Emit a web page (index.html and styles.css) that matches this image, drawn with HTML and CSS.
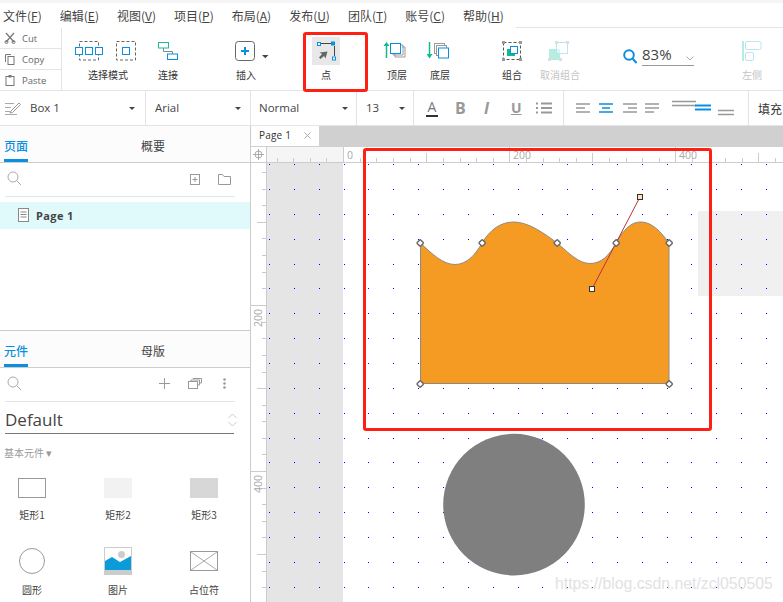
FILE: index.html
```html
<!DOCTYPE html>
<html lang="zh">
<head>
<meta charset="utf-8">
<title>Axure</title>
<link rel="stylesheet" href="styles.css">
</head>
<body>
<div class="app">
  <nav class="menubar">
    <span class="menu">文件(<u>F</u>)</span>
    <span class="menu">编辑(<u>E</u>)</span>
    <span class="menu">视图(<u>V</u>)</span>
    <span class="menu">项目(<u>P</u>)</span>
    <span class="menu">布局(<u>A</u>)</span>
    <span class="menu">发布(<u>U</u>)</span>
    <span class="menu">团队(<u>T</u>)</span>
    <span class="menu">账号(<u>C</u>)</span>
    <span class="menu">帮助(<u>H</u>)</span>
    <span class="menu-line"></span>
  </nav>

  <div class="toolbar">
    <div class="clip">
      <div class="clip-row">
        <svg class="clip-ico" width="12" height="12" viewBox="0 0 12 12"><path d="M2 1l8 9M10 1L2 10" fill="none" stroke="#777" stroke-width="1.200"/><circle cx="2.500" cy="10" r="1.500" fill="none" stroke="#777"/><circle cx="9.500" cy="10" r="1.500" fill="none" stroke="#777"/></svg>
        <span>Cut</span>
      </div>
      <div class="clip-row">
        <svg class="clip-ico" width="12" height="12" viewBox="0 0 12 12"><path d="M1.500 9V1.500H7" fill="none" stroke="#777"/><rect x="4" y="3.500" width="6" height="8" fill="none" stroke="#777"/></svg>
        <span>Copy</span>
      </div>
      <div class="clip-row">
        <svg class="clip-ico" width="12" height="12" viewBox="0 0 12 12"><rect x="2" y="2.500" width="8" height="9" fill="none" stroke="#777"/><rect x="4.500" y="1" width="3" height="2.500" fill="#777"/></svg>
        <span>Paste</span>
      </div>
    </div>

    <div class="tool t-select">
      <svg width="62" height="24" viewBox="75 39 62 24"><rect x="79.500" y="41.500" width="19" height="18.500" fill="none" stroke="#666" stroke-dasharray="3 2"/><rect x="116.500" y="41.500" width="19" height="18.500" fill="none" stroke="#666" stroke-dasharray="3 2"/><g fill="#fff" stroke="#0b8fe0"><rect x="75.500" y="47.500" width="7" height="7"/><rect x="85.500" y="47.500" width="7" height="7"/><rect x="95.500" y="47.500" width="7" height="7"/><rect x="122.500" y="47.500" width="7" height="7"/></g></svg>
      <span>选择模式</span>
    </div>
    <div class="tool t-connect">
      <svg width="22" height="24" viewBox="157 39 22 24"><path d="M163.500 48v3.500h9V54" fill="none" stroke="#888"/><rect x="158.500" y="42.500" width="10" height="5.500" fill="#fff" stroke="#1abc9c"/><rect x="167.500" y="54" width="10" height="5.500" fill="#fff" stroke="#0b8fe0"/></svg>
      <span>连接</span>
    </div>
    <div class="tool t-insert">
      <svg width="36" height="24" viewBox="234 39 36 24"><rect x="235.500" y="41.500" width="19" height="19" rx="3" fill="#fff" stroke="#666"/><path d="M245 47v8M241 51h8" stroke="#0b8fe0" stroke-width="2"/><path d="M262 55h6.500l-3.200 3.200z" fill="#444"/></svg>
      <span>插入</span>
    </div>
    <div class="tool t-point">
      <svg width="28" height="28" viewBox="312 37 28 28"><rect x="312" y="37" width="28" height="28" fill="#e8e8e8"/><path d="M321 43.500h10M334.500 46v10" stroke="#444"/><rect x="317.500" y="42.500" width="3" height="3" fill="#fff" stroke="#0b8fe0"/><rect x="331" y="41.500" width="4" height="4" fill="#0b8fe0"/><rect x="332.500" y="57" width="3" height="3" fill="#fff" stroke="#0b8fe0"/><path d="M327.500 51.500l-2 7-1.500-2.500-3.500 3-1.500-1.500 3-3.500-2.500-1.500z" fill="#666"/></svg>
      <span>点</span>
    </div>
    <div class="tool t-top">
      <svg width="24" height="24" viewBox="387 39 24 24"><path d="M390.500 58V45" stroke="#14b98f" stroke-width="1.500"/><path d="M387.500 46l3-4 3 4z" fill="#14b98f"/><path d="M406 47h3v10h-10v-3" fill="none" stroke="#999"/><path d="M405 45h2v10h-10v-2" fill="none" stroke="#999"/><rect x="394.500" y="43.500" width="10" height="10" fill="#fff" stroke="#0b8fe0"/></svg>
      <span>顶层</span>
    </div>
    <div class="tool t-bottom">
      <svg width="24" height="24" viewBox="429 39 24 24"><path d="M431.500 42v13" stroke="#14b98f" stroke-width="1.500"/><path d="M428.500 54l3 4.500 3-4.500z" fill="#14b98f"/><rect x="436.500" y="43.500" width="10" height="10" fill="#fff" stroke="#999"/><rect x="438.500" y="45.500" width="10" height="10" fill="#fff" stroke="#999"/><rect x="440.500" y="48" width="10" height="10" fill="#fff" stroke="#0b8fe0"/></svg>
      <span>底层</span>
    </div>
    <div class="tool t-group">
      <svg width="24" height="24" viewBox="500 39 24 24"><rect x="503.500" y="42.500" width="17" height="17" fill="none" stroke="#555" stroke-dasharray="3 2"/><g fill="#999"><rect x="502" y="41" width="3" height="3"/><rect x="519" y="41" width="3" height="3"/><rect x="502" y="58" width="3" height="3"/><rect x="519" y="58" width="3" height="3"/></g><rect x="507" y="49" width="8" height="7" fill="#14b98f"/><rect x="510.500" y="46.500" width="7" height="7" fill="#fff" stroke="#0b8fe0"/></svg>
      <span>组合</span>
    </div>
    <div class="tool t-ungroup">
      <svg width="24" height="24" viewBox="549 39 24 24"><rect x="551" y="49" width="11" height="11" fill="#b7ece0"/><rect x="558.500" y="42.500" width="11" height="11" fill="#fff" fill-opacity=".5" stroke="#bfe3f6"/><g fill="#ddd"><rect x="557" y="41" width="3" height="3"/><rect x="568" y="41" width="3" height="3"/><rect x="550" y="58" width="3" height="3"/><rect x="561" y="58" width="3" height="3"/></g></svg>
      <span>取消组合</span>
    </div>
    <div class="zoom">
      <svg width="14" height="15" viewBox="623 49 14 15"><circle cx="629" cy="55" r="4.800" fill="none" stroke="#0b8fe0" stroke-width="2"/><path d="M632.500 58.500l4 4.500" stroke="#0b8fe0" stroke-width="2"/></svg>
      <div class="zoom-field"><span>83%</span><svg width="8" height="5" viewBox="0 0 8 5"><path d="M.5.500L4 4l3.500-3.500" fill="none" stroke="#aaa"/></svg></div>
    </div>
    <div class="tool t-left">
      <svg width="22" height="24" viewBox="742 39 22 24"><rect x="743" y="41" width="2" height="20" fill="#b7ece0"/><rect x="746.500" y="41.500" width="15.500" height="8" rx="1.500" fill="none" stroke="#bfe3f6"/><rect x="746.500" y="52.500" width="8" height="8" rx="1.500" fill="none" stroke="#bfe3f6"/></svg>
      <span>左侧</span>
    </div>
  </div>

  <div class="formatbar">
    <div class="cell c-name">
      <svg width="16" height="14" viewBox="0 0 16 14"><path d="M0 2.500h9M0 6.500h6M0 10.500h5M0 13.500h12" stroke="#aaa"/><path d="M6 10l8-8 1.500 1.500-8 8-2.500.5z" fill="#fff" stroke="#999"/></svg>
      <span class="cell-text">Box 1</span><i class="caret"></i>
    </div>
    <div class="cell c-font"><span>Arial</span><i class="caret"></i></div>
    <div class="cell c-style"><span>Normal</span><i class="caret"></i></div>
    <div class="cell c-size"><span>13</span><i class="caret"></i></div>
    <div class="cell c-text">
      <span class="fmt fmt-a">A</span>
      <span class="fmt fmt-b">B</span>
      <span class="fmt fmt-i">I</span>
      <span class="fmt fmt-u">U</span>
      <svg width="16" height="12" viewBox="0 0 16 12"><path d="M5 1.500h11M5 6h11M5 10.500h11" stroke="#999" stroke-width="2"/><path d="M0 1.500h3M0 6h3M0 10.500h3" stroke="#999" stroke-width="2" stroke-dasharray="2 1"/></svg>
    </div>
    <div class="cell c-align">
      <svg width="162" height="18" viewBox="575 99 162 18"><g stroke="#999" stroke-width="1.500" fill="none"><path d="M576 104h14M576 108h9M576 112h14M623 104h14M628 108h9M623 112h14M645 104h14M645 108h14M645 112h9M672 101.500h24M672 105.500h24M718 110.500h16M718 114.500h16"/></g><g stroke="#0b8fe0" stroke-width="1.500" fill="none"><path d="M599 104h14M602 108h8M599 112h14"/></g><path d="M695 105.500h16M695 109.500h16" stroke="#0b8fe0" stroke-width="2"/></svg>
    </div>
    <div class="cell c-fill">填充</div>
  </div>

  <div class="main">
    <aside class="side">
      <section class="pages">
        <div class="tabs">
          <span class="tab active">页面</span>
          <span class="tab other">概要</span>
        </div>
        <div class="search">
          <svg class="search-ico" width="15" height="15" viewBox="0 0 15 15"><circle cx="6" cy="6" r="5" fill="none" stroke="#aaa"/><path d="M9.500 9.500L14 14" stroke="#aaa"/></svg>
          <svg class="a1" width="10" height="11" viewBox="0 0 10 11"><rect x=".5" y=".5" width="9" height="10" fill="none" stroke="#999"/><path d="M5 3v5M2.500 5.500h5" stroke="#999"/></svg>
          <svg class="a2" width="13" height="11" viewBox="0 0 13 11"><path d="M.5 10.500V.5h4l1.500 2h6.500v8z" fill="none" stroke="#999"/></svg>
        </div>
        <div class="page-row">
          <svg width="11" height="14" viewBox="0 0 11 14"><rect x=".5" y=".5" width="10" height="13" fill="#fff" stroke="#888"/><path d="M2.500 4h6M2.500 6.500h6M2.500 9h6" stroke="#888"/></svg>
          <span>Page 1</span>
        </div>
      </section>
      <section class="widgets">
        <div class="tabs">
          <span class="tab active">元件</span>
          <span class="tab other">母版</span>
        </div>
        <div class="search">
          <svg class="search-ico" width="15" height="15" viewBox="0 0 15 15"><circle cx="6" cy="6" r="5" fill="none" stroke="#aaa"/><path d="M9.500 9.500L14 14" stroke="#aaa"/></svg>
          <svg class="b1" width="11" height="11" viewBox="0 0 11 11"><path d="M5.500 0v11M0 5.500h11" stroke="#999"/></svg>
          <svg class="b2" width="14" height="11" viewBox="0 0 14 11"><rect x=".5" y="3.500" width="9" height="7" fill="#fff" stroke="#999"/><path d="M3 3.500V2h8.500v5H9.500M5 1V.5h8.500V5H11.500" fill="none" stroke="#999"/></svg>
          <svg class="b3" width="3" height="11" viewBox="0 0 3 11"><circle cx="1.500" cy="1.500" r="1.300" fill="#999"/><circle cx="1.500" cy="5.500" r="1.300" fill="#999"/><circle cx="1.500" cy="9.500" r="1.300" fill="#999"/></svg>
        </div>
        <div class="lib">
          <span>Default</span>
          <svg width="9" height="14" viewBox="0 0 9 14"><path d="M.5 5L4.500 1l4 4M.5 9l4 4 4-4" fill="none" stroke="#ccc"/></svg>
        </div>
        <div class="group-label">基本元件 <span class="tri">▾</span></div>
        <div class="widget-grid">
          <div class="widget"><div class="w-box w-rect1"></div><span>矩形1</span></div>
          <div class="widget"><div class="w-box w-rect2"></div><span>矩形2</span></div>
          <div class="widget"><div class="w-box w-rect3"></div><span>矩形3</span></div>
          <div class="widget"><svg width="28" height="28" viewBox="0 0 28 28"><circle cx="14" cy="14" r="12.500" fill="#fff" stroke="#999"/></svg><span>圆形</span></div>
          <div class="widget"><svg width="28" height="28" viewBox="0 0 28 28"><rect x=".5" y=".5" width="27" height="27" fill="#fff" stroke="#ccc"/><rect x="1" y="23" width="26" height="5" fill="#ccc"/><path d="M1 23v-9l7-4 8 5 11-6v14z" fill="#0b9bd8"/><circle cx="17.500" cy="7.500" r="3.500" fill="#ccc"/></svg><span>图片</span></div>
          <div class="widget"><svg width="28" height="28" viewBox="0 0 28 28"><rect x=".5" y="4.500" width="27" height="19" fill="#fff" stroke="#999"/><path d="M1 5l26 18M27 5L1 23" stroke="#aaa"/></svg><span>占位符</span></div>
        </div>
      </section>
    </aside>

    <div class="workspace">
      <div class="tabstrip">
        <div class="doc-tab"><span>Page 1</span><svg width="7" height="7" viewBox="0 0 7 7"><path d="M.5.500l6 6M6.500.500l-6 6" stroke="#aaa"/></svg></div>
      </div>
      <svg class="canvas" width="532" height="455" viewBox="251 147 532 455">
        <rect x="267" y="147" width="76" height="15" fill="#f5f5f5"/>
        <rect x="267" y="163" width="76" height="439" fill="#e5e5e5"/>
        <rect x="698" y="211" width="85" height="85" fill="#f0f0f0"/>
        <path class="ruler-line" d="M251 162.500H783M266.500 147V602"/>
        <path class="ticks" d="M277.500 158V162M293.500 158V162M310.500 158V162M326.500 158V162M360.500 158V162M376.500 158V162M393.500 158V162M410.500 158V162M443.500 158V162M460.500 158V162M476.500 158V162M493.500 158V162M526.500 158V162M543.500 158V162M559.500 158V162M576.500 158V162M609.500 158V162M626.500 158V162M642.500 158V162M659.500 158V162M692.500 158V162M709.500 158V162M725.500 158V162M742.500 158V162M775.500 158V162M426.500 153V162M592.500 153V162M758.500 153V162M343.500 147V162M509.500 147V162M675.500 147V162"/>
        <path class="ticks" d="M262 172.500H266M262 189.500H266M262 205.500H266M262 238.500H266M262 255.500H266M262 272.500H266M262 288.500H266M262 322.500H266M262 338.500H266M262 355.500H266M262 372.500H266M262 405.500H266M262 421.500H266M262 438.500H266M262 454.500H266M262 488.500H266M262 504.500H266M262 521.500H266M262 537.500H266M262 571.500H266M262 587.500H266M257 222.500H266M257 388.500H266M257 554.500H266M251 305.500H266M251 471.500H266"/>
        <text class="rule-num" x="347" y="159">0</text>
        <text class="rule-num" x="513" y="159">200</text>
        <text class="rule-num" x="679" y="159">400</text>
        <text class="rule-num" transform="rotate(-90 262 327)" x="262" y="327">200</text>
        <text class="rule-num" transform="rotate(-90 262 493)" x="262" y="493">400</text>
        <g stroke="#aaa" fill="none"><circle cx="258.500" cy="154.500" r="3.500"/><path d="M258.500 149v11M253 154.500h11"/></g>
        <path class="dots" d="M269 164.500H783M269 189.500H783M269 214.500H783M269 239.500H783M269 264.500H783M269 288.500H783M269 313.500H783M269 338.500H783M269 363.500H783M269 388.500H783M269 413.500H783M269 438.500H783M269 462.500H783M269 487.500H783M269 512.500H783M269 537.500H783M269 562.500H783M269 587.500H783"/>
        <circle cx="514" cy="504.600" r="70.800" fill="#7f7f7f"/>
        <path class="shape" d="M420.500 243C432 254 443 264.500 455 264.500C467 264.500 476 254 482 243C490 230 500 222 514 222C528 222 544 233 557 243C568 252 578 263.500 590 263.500C601 263.500 609 256 616 243C624 229 631 222 641 222C652 222 661 232 669 243V383.500H420.500Z"/>
        <path d="M592 289L640 197" stroke="#b8323c" fill="none"/>
        <g class="vertex">
          <rect x="417.700" y="240.500" width="5" height="5" transform="rotate(45 420.200 243)"/>
          <rect x="479.700" y="240.500" width="5" height="5" transform="rotate(45 482.200 243)"/>
          <rect x="554.700" y="240.500" width="5" height="5" transform="rotate(45 557.200 243)"/>
          <rect x="613.700" y="240.500" width="5" height="5" transform="rotate(45 616.200 243)"/>
          <rect x="666.700" y="240.500" width="5" height="5" transform="rotate(45 669.200 243)"/>
          <rect x="417.700" y="381.500" width="5" height="5" transform="rotate(45 420.200 384)"/>
          <rect x="666.700" y="381.500" width="5" height="5" transform="rotate(45 669.200 384)"/>
        </g>
        <rect x="637.500" y="194.500" width="5" height="5" fill="#ffe2b4" stroke="#333"/>
        <rect x="589.500" y="286.500" width="5" height="5" fill="#fff" stroke="#333"/>
        <text class="watermark" x="555" y="589">https://blog.csdn.net/zcl050505</text>
      </svg>
    </div>
  </div>

  <div class="highlight hl-tool"></div>
  <div class="highlight hl-canvas"></div>
</div>
</body>
</html>
```

FILE: styles.css
```css
* { box-sizing: border-box; }
html, body { margin: 0; padding: 0; background: #fff; }
body { font-family: "Open Sans", "Noto Sans CJK SC", sans-serif; color: #333; }
u { text-underline-offset: 1px; }
svg { display: block; flex: none; }

.app { position: relative; width: 783px; height: 602px; overflow: hidden; display: flex; flex-direction: column; background: #fff; }

/* Menu */
.menubar { position: relative; height: 28px; flex: none; display: flex; align-items: center; gap: 18px; padding: 3px 0 1px 3px; background: linear-gradient(#f5f5f5 3px, #fff 3px); font-family: "Noto Sans CJK SC", "Open Sans", sans-serif; font-size: 12px; color: #444; }
.menu { flex: none; white-space: nowrap; }
.menu-line { position: absolute; left: 516px; right: 0; bottom: 0; height: 1px; background: #e4e4e4; }

/* Toolbar */
.toolbar { height: 63px; flex: none; display: flex; border-bottom: 1px solid #e4e4e4; font-family: "Noto Sans CJK SC", "Open Sans", sans-serif; font-size: 10px; color: #333; }
.clip { width: 62px; flex: none; display: flex; flex-direction: column; border-right: 1px solid #e4e4e4; font-family: "Open Sans", sans-serif; font-size: 9.500px; color: #666; }
.clip-row { flex: 1; display: flex; align-items: center; gap: 6px; padding-left: 4px; border-bottom: 1px solid #e4e4e4; }
.clip-row:last-child { border-bottom: 0; }
.tool { flex: none; display: flex; flex-direction: column; align-items: center; padding-top: 11px; position: relative; }
.tool span { position: absolute; top: 39px; left: 50%; transform: translateX(-50%); white-space: nowrap; line-height: 16px; }
.t-select { width: 92px; }
.t-select svg { margin-right: 4px; }
.t-connect { width: 28px; }
.t-insert { width: 56px; margin-left: 36px; }
.t-insert svg { margin-left: 12px; }
.t-point { width: 40px; margin-left: 32px; padding-top: 9px; }
.t-top { width: 40px; margin-left: 31px; }
.t-top svg { margin-right: 4px; }
.t-bottom { width: 40px; margin-left: 3px; }
.t-bottom svg { margin-right: 2px; }
.t-group { width: 40px; margin-left: 32px; }
.t-ungroup { width: 56px; }
.t-ungroup svg { margin-right: 2px; }
.t-ungroup span { color: #c4c4c4; }
.t-left { width: 40px; margin-left: 38px; }
.t-left span { color: #c4c4c4; }
.zoom { flex: none; width: 70px; margin-left: 36px; display: flex; align-items: flex-start; gap: 5px; padding-top: 21px; }
.zoom > svg { margin-left: -1px; }
.zoom-field { width: 52px; height: 22px; margin-top: -5px; border-bottom: 1px solid #999; display: flex; justify-content: space-between; align-items: flex-start; font-family: "Open Sans", sans-serif; font-size: 15px; line-height: 20px; color: #444; }
.zoom-field svg { margin: 12px 0 0; }

/* Format bar */
.formatbar { height: 35px; flex: none; display: flex; border-bottom: 1px solid #e4e4e4; font-size: 11.500px; color: #444; }
.cell { flex: none; height: 100%; display: flex; align-items: center; position: relative; border-right: 1px solid #e4e4e4; }
.caret { position: absolute; top: 16px; width: 0; height: 0; border: 3.500px solid transparent; border-top: 3.500px solid #444; border-bottom: 0; }
.c-name { width: 146px; padding-left: 5px; }
.cell-text { margin: 0 0 2px 9px; }
.c-name .caret { right: 10px; }
.c-font { width: 105px; padding: 0 0 2px 9px; }
.c-font .caret { right: 9px; }
.c-style { width: 106px; padding: 0 0 2px 8px; }
.c-style .caret { right: 8px; }
.c-size { width: 57px; padding: 0 0 2px 9px; }
.c-size .caret { right: 8px; }
.c-text { width: 150px; font-weight: 700; color: #999; }
.c-text svg { position: absolute; left: 122px; top: 11px; }
.fmt { position: absolute; top: 7px; line-height: 20px; font-size: 16px; }
.fmt-a { left: 12px; width: 12px; text-align: center; color: #777; font-weight: 400; font-size: 14px; border-bottom: 2.500px solid #333; line-height: 15px; height: 18px; top: 8px; }
.fmt-b { left: 41px; }
.fmt-i { left: 70px; font-style: italic; }
.fmt-u { left: 97px; text-decoration: underline; font-size: 14px; }
.c-align { width: 185px; padding-left: 11px; }
.c-fill { border-right: 0; padding-left: 9px; font-family: "Noto Sans CJK SC", sans-serif; font-size: 12px; color: #333; }

/* Main */
.main { flex: 1; display: flex; min-height: 0; }
.side { width: 251px; flex: none; display: flex; flex-direction: column; border-right: 1px solid #ccc; }
.pages { height: 205px; flex: none; border-bottom: 1px solid #ccc; }
.widgets { flex: 1; }
.tabs { position: relative; height: 37px; border-bottom: 1px solid #ccc; background: #fcfcfc; font-family: "Noto Sans CJK SC", sans-serif; font-size: 12px; }
.tab { position: absolute; top: 11px; line-height: 18px; }
.tab.active { left: 4px; width: 24px; height: 25px; color: #0b8fe0; font-weight: 500; border-bottom: 3px solid #0b8fe0; }
.tab.other { left: 141px; color: #444; }
.search { position: relative; height: 34px; margin: 0 15px 0 5px; border-bottom: 1px solid #e4e4e4; }
.search svg { position: absolute; }
.search-ico { left: 2px; top: 8px; }
.a1 { left: 185px; top: 11px; }
.a2 { left: 213px; top: 11px; }
.b1 { left: 154px; top: 10px; }
.b2 { left: 183px; top: 10px; }
.b3 { left: 218px; top: 10px; }
.page-row { margin-top: 5px; height: 27px; background: #e0f9fb; display: flex; align-items: center; gap: 7px; padding: 0 0 1px 18px; font-size: 11px; font-weight: 700; letter-spacing: .4px; color: #444; }
.lib { height: 32px; margin: 0 16px 0 5px; border-bottom: 1px solid #777; display: flex; align-items: center; justify-content: space-between; font-size: 17px; color: #444; }
.lib span { line-height: 24px; margin-top: 5px; }
.lib svg { margin: 5px -3px 0 0; }
.group-label { margin: 10px 0 0 4px; height: 16px; line-height: 16px; font-family: "Noto Sans CJK SC", sans-serif; font-size: 10px; color: #999; }
.tri { font-size: 11px; }
.widget-grid { display: grid; grid-template-columns: repeat(3, 86px); grid-auto-rows: 70px; margin: 17px 0 0 -11px; justify-content: start; }
.widget { position: relative; display: flex; flex-direction: column; align-items: center; padding-top: 1px; font-family: "Noto Sans CJK SC", sans-serif; font-size: 10px; color: #444; }
.widget span { position: absolute; top: 30px; line-height: 16px; white-space: nowrap; }
.widget:nth-child(n+4) { padding-top: 0; }
.widget:nth-child(n+4) span { top: 35px; }
.w-box { width: 28px; height: 20px; }
.w-rect1 { border: 1px solid #999; background: #fff; }
.w-rect2 { background: #f2f2f2; }
.w-rect3 { background: #d7d7d7; }

/* Workspace */
.workspace { flex: 1; min-width: 0; display: flex; flex-direction: column; }
.tabstrip { height: 21px; flex: none; background: #d0d0d0; display: flex; }
.doc-tab { width: 68px; height: 20px; background: #fff; display: flex; align-items: center; gap: 13px; padding: 0 0 2px 8px; font-size: 10px; letter-spacing: .2px; color: #333; }
.canvas { flex: none; }
.ruler-line { stroke: #ccc; fill: none; shape-rendering: crispEdges; }
.ticks { stroke: #ccc; fill: none; shape-rendering: crispEdges; }
.rule-num { font-family: "Open Sans", sans-serif; font-size: 10.500px; fill: #aaa; }
.dots { stroke: #0000ff; stroke-width: 1; stroke-dasharray: 1 23.85; fill: none; shape-rendering: crispEdges; }
.shape { fill: #f59b23; stroke: #8f8a80; stroke-width: 1; }
.vertex rect { fill: #fff; stroke: #666; stroke-width: 1.400; rx: 1px; }
.watermark { font-family: "Liberation Sans", sans-serif; font-size: 15.800px; fill: #e2e2e2; }

/* Highlights */
.highlight { position: absolute; border: 3px solid #ff2014; border-radius: 3px; pointer-events: none; }
.hl-tool { left: 303px; top: 32px; width: 65px; height: 60px; }
.hl-canvas { left: 363px; top: 148px; width: 349px; height: 283px; }
```
